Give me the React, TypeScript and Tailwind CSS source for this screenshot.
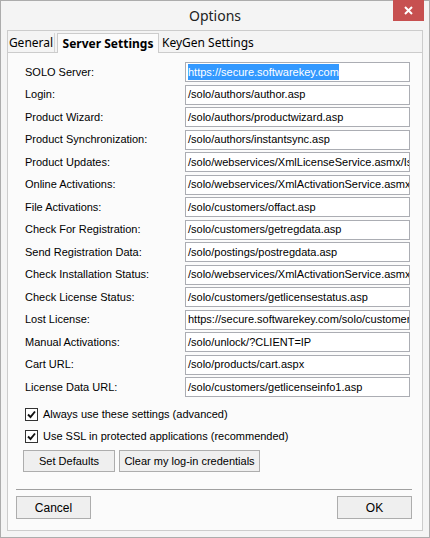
import React from 'react';

const rows: { label: string; value: string; selected?: boolean }[] = [
  { label: 'SOLO Server:', value: 'https://secure.softwarekey.com', selected: true },
  { label: 'Login:', value: '/solo/authors/author.asp' },
  { label: 'Product Wizard:', value: '/solo/authors/productwizard.asp' },
  { label: 'Product Synchronization:', value: '/solo/authors/instantsync.asp' },
  { label: 'Product Updates:', value: '/solo/webservices/XmlLicenseService.asmx/IsLicenseValid' },
  { label: 'Online Activations:', value: '/solo/webservices/XmlActivationService.asmx' },
  { label: 'File Activations:', value: '/solo/customers/offact.asp' },
  { label: 'Check For Registration:', value: '/solo/customers/getregdata.asp' },
  { label: 'Send Registration Data:', value: '/solo/postings/postregdata.asp' },
  { label: 'Check Installation Status:', value: '/solo/webservices/XmlActivationService.asmx' },
  { label: 'Check License Status:', value: '/solo/customers/getlicensestatus.asp' },
  { label: 'Lost License:', value: 'https://secure.softwarekey.com/solo/customers/lostlicense.asp' },
  { label: 'Manual Activations:', value: '/solo/unlock/?CLIENT=IP' },
  { label: 'Cart URL:', value: '/solo/products/cart.aspx' },
  { label: 'License Data URL:', value: '/solo/customers/getlicenseinfo1.asp' },
];

function CheckBox({ label }: { label: string }) {
  return (
    <div className="flex items-center h-[16px] gap-[5px]">
      <div className="w-[13px] h-[13px] border border-[#333333] bg-white flex items-center justify-center">
        <svg width="11" height="11" viewBox="0 0 11 11">
          <path d="M2 5.5 L4.5 8 L9 2.5" fill="none" stroke="#111" strokeWidth="1.9" />
        </svg>
      </div>
      <span>{label}</span>
    </div>
  );
}

function Button({ children, className }: { children: React.ReactNode; className: string }) {
  return (
    <div
      className={`flex items-center justify-center border border-[#adadad] bg-[#efefef] text-black ${className}`}
    >
      {children}
    </div>
  );
}

export default function App() {
  return (
    <div className="w-[430px] h-[538px] bg-[#f4f4f4] border border-[#acacac] flex flex-col font-['Liberation_Sans',Arial,sans-serif] text-[11px] text-black">
      {/* title bar */}
      <div className="relative h-[29px] flex items-center justify-center">
        <span className="font-['Noto_Sans',sans-serif] text-[14px] text-[#222222]">Options</span>
        <div className="absolute right-[5px] top-[-1px] w-[31px] h-[21px] bg-[#c75050] flex items-center justify-center">
          <svg width="9" height="9" viewBox="0 0 9 9">
            <path d="M1 1 L8 8 M8 1 L1 8" stroke="#fff" strokeWidth="2" />
          </svg>
        </div>
      </div>

      <div className="mx-[6px] mb-[6px] flex-1 border border-[#cccccc] flex flex-col">
        {/* tabs */}
        <div className="h-[21px] flex items-end font-['Noto_Sans',sans-serif] text-[12px]">
          <div className="w-[47px] h-[19px] flex items-center justify-center border-r border-[#d6d6d6]">General</div>
          <div className="ml-[2px] relative z-10 mb-[-1px] w-[102px] h-[20px] bg-[#fbfbfb] border border-b-0 border-[#cccccc] flex items-center justify-center font-bold">
            Server Settings
          </div>
          <div className="h-[19px] flex items-center pl-[3px]">KeyGen Settings</div>
        </div>

        {/* panel */}
        <div className="flex-1 bg-[#fbfbfb] border-t border-[#cccccc] pl-[8px] pr-[10px] pt-[9px] flex flex-col">
          <div className="pl-[9px] flex flex-col gap-[2.5px]">
            {rows.map((r) => (
              <div key={r.label} className="flex items-center h-5">
                <div className="w-[160px]">{r.label}</div>
                <div className="w-[225px] h-5 border border-[#abadb3] bg-white px-[2px] flex items-center overflow-hidden whitespace-nowrap">
                  {r.selected ? (
                    <span className="bg-[#3399ff] text-white">{r.value}</span>
                  ) : (
                    <span>{r.value}</span>
                  )}
                </div>
              </div>
            ))}
          </div>

          <div className="pl-[9px] mt-[9px] flex flex-col gap-[6px]">
            <CheckBox label="Always use these settings (advanced)" />
            <CheckBox label="Use SSL in protected applications (recommended)" />
          </div>

          <div className="pl-[7px] mt-[6px] flex gap-[4px]">
            <Button className="w-[92px] h-[22px]">Set Defaults</Button>
            <Button className="w-[141px] h-[22px]">Clear my log-in credentials</Button>
          </div>

          <div className="mt-[17px] border-t border-[#a0a0a0]" />

          <div className="mt-[6px] flex justify-between">
            <Button className="w-[75px] h-[23px] text-[12px]">Cancel</Button>
            <Button className="w-[75px] h-[23px] text-[12px]">OK</Button>
          </div>
        </div>
      </div>
    </div>
  );
}
